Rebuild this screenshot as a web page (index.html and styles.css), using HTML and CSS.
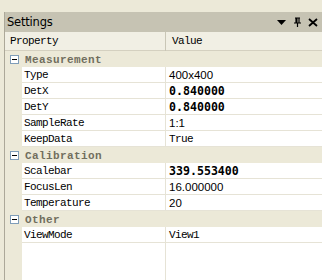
FILE: index.html
```html
<!DOCTYPE html>
<html>
<head>
<meta charset="utf-8">
<link rel="stylesheet" href="styles.css">
</head>
<body>
<div class="panel">
  <div class="titlebar">
    <span class="title">Settings</span>
    <div class="tools">
      <svg width="11" height="8" viewBox="0 0 11 8"><path d="M1 2 H10 L5.5 7 Z" fill="#000"/></svg>
      <svg width="9" height="10" viewBox="0 0 9 10"><path d="M2 1 H7 M3 1 V6 M6 1 V6 M1 6 H8 M4.5 6 V10" stroke="#000" stroke-width="1.2" fill="none"/><rect x="3" y="1" width="1.5" height="5" fill="#000"/></svg>
      <svg width="10" height="9" viewBox="0 0 10 9"><path d="M1 1 L9 8 M9 1 L1 8" stroke="#000" stroke-width="1.8"/></svg>
    </div>
  </div>
  <div class="grid">
    <div class="head">
      <div class="hname">Property</div>
      <div class="hval">Value</div>
    </div>

    <div class="cat"><span class="box"></span><span class="ctext">Measurement</span></div>
    <div class="row"><div class="name">Type</div><div class="val sans">400x400</div></div>
    <div class="row"><div class="name">DetX</div><div class="val bold">0.840000</div></div>
    <div class="row"><div class="name">DetY</div><div class="val bold">0.840000</div></div>
    <div class="row"><div class="name">SampleRate</div><div class="val sans">1:1</div></div>
    <div class="row"><div class="name">KeepData</div><div class="val mono">True</div></div>

    <div class="cat"><span class="box"></span><span class="ctext">Calibration</span></div>
    <div class="row"><div class="name">Scalebar</div><div class="val bold">339.553400</div></div>
    <div class="row"><div class="name">FocusLen</div><div class="val sans">16.000000</div></div>
    <div class="row"><div class="name">Temperature</div><div class="val sans">20</div></div>

    <div class="cat"><span class="box"></span><span class="ctext">Other</span></div>
    <div class="row"><div class="name">ViewMode</div><div class="val mono">View1</div></div>

    <div class="rest">
      <div class="restname"></div>
      <div class="restval"></div>
    </div>
  </div>
</div>
</body>
</html>
```

FILE: styles.css
```css
html, body {
  margin: 0;
  padding: 0;
  height: 100%;
  background: #ece9d8;
}
body {
  overflow: hidden;
}
.panel {
  margin: 12px 0 0 4px;
  border-left: 1px solid #aca899;
  height: 268px;
  display: flex;
  flex-direction: column;
}
.titlebar {
  height: 20px;
  background: #c6c3b3;
  display: flex;
  align-items: center;
  justify-content: space-between;
  font-family: "DejaVu Sans", sans-serif;
  font-size: 11.5px;
  color: #000;
}
.title {
  padding-left: 2px;
  letter-spacing: -0.2px;
}
.tools {
  display: flex;
  align-items: center;
  gap: 6px;
  padding-right: 4px;
}
.grid {
  flex: 1;
  display: flex;
  flex-direction: column;
  background: #fff;
}
.head {
  height: 18px;
  display: grid;
  grid-template-columns: 160px 1fr;
  background: #f1efe4;
  border-bottom: 1px solid #d4d0c0;
  font-family: "Liberation Mono", monospace;
  font-size: 11px;
  letter-spacing: -0.6px;
  line-height: 19px;
}
.hname {
  padding-left: 5px;
}
.hval {
  border-left: 1px solid #c9c6b6;
  padding-left: 6px;
}
.cat {
  height: 16px;
  background: #ece9d8;
  display: flex;
  align-items: center;
}
.box {
  width: 7px;
  height: 7px;
  border: 1px solid #7f9db9;
  background: #fff;
  margin-left: 5px;
  margin-right: 6px;
  position: relative;
}
.box::after {
  content: "";
  position: absolute;
  left: 1px;
  top: 3px;
  width: 5px;
  height: 1px;
  background: #000;
}
.ctext {
  font-family: "Liberation Mono", monospace;
  font-size: 11px;
  font-weight: bold;
  color: #716e5e;
  letter-spacing: 0.4px;
  padding-top: 1px;
}
.row {
  height: 16px;
  display: grid;
  grid-template-columns: 17px 143px 1fr;
}
.row::before {
  content: "";
  background: #ece9d8;
}
.name, .val {
  border-bottom: 1px solid #e6e3d6;
  line-height: 17px;
  height: 15px;
  overflow: hidden;
  color: #000;
}
.name {
  font-family: "Liberation Mono", monospace;
  font-size: 11px;
  letter-spacing: -0.6px;
  padding-left: 2px;
}
.val {
  border-left: 1px solid #e6e3d6;
  padding-left: 3px;
}
.sans {
  font-family: "Liberation Sans", sans-serif;
  font-size: 11.5px;
}
.bold {
  font-family: "DejaVu Sans Mono", monospace;
  font-weight: bold;
  font-size: 11.6px;
}
.mono {
  font-family: "Liberation Mono", monospace;
  font-size: 11px;
  letter-spacing: -0.6px;
}
.rest {
  flex: 1;
  display: grid;
  grid-template-columns: 17px 143px 1fr;
}
.rest::before {
  content: "";
  background: #ece9d8;
}
.restval {
  border-left: 1px solid #e6e3d6;
}
```
